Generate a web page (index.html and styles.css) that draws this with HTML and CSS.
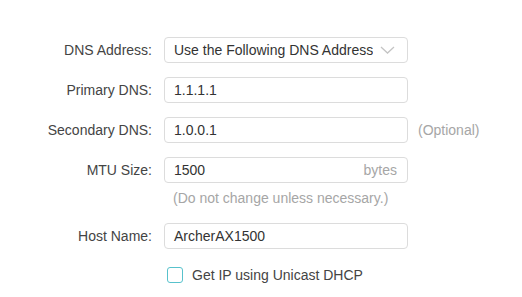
FILE: index.html
```html
<!DOCTYPE html>
<html lang="en">
<head>
  <meta charset="UTF-8" />
  <title>Internet Settings</title>
  <link rel="stylesheet" href="styles.css">
</head>
<body>
  <div class="form">
    <div class="row">
      <label class="label">DNS Address:</label>
      <div class="field select">
        <span class="value clip">Use the Following DNS Addresses</span>
        <svg class="chevron" width="15" height="8" viewBox="0 0 15 8">
          <polyline points="1,1 7.5,7 14,1" fill="none" stroke="#c4c4c4" stroke-width="1.3"/>
        </svg>
      </div>
    </div>

    <div class="row">
      <label class="label">Primary DNS:</label>
      <div class="field"><span class="value">1.1.1.1</span></div>
    </div>

    <div class="row">
      <label class="label">Secondary DNS:</label>
      <div class="field"><span class="value">1.0.0.1</span></div>
      <span class="note">(Optional)</span>
    </div>

    <div class="row tight">
      <label class="label">MTU Size:</label>
      <div class="field">
        <span class="value">1500</span>
        <span class="unit">bytes</span>
      </div>
    </div>
    <div class="hint">(Do not change unless necessary.)</div>

    <div class="row">
      <label class="label">Host Name:</label>
      <div class="field"><span class="value">ArcherAX1500</span></div>
    </div>

    <div class="check-row">
      <span class="checkbox"></span>
      <span class="check-label">Get IP using Unicast DHCP</span>
    </div>
  </div>
</body>
</html>
```

FILE: styles.css
```css
body {
  margin: 0;
  background: #fff;
  font-family: "Liberation Sans", Arial, sans-serif;
  font-size: 14px;
  color: #333;
}
.form {
  padding-top: 37px;
}
.row {
  display: flex;
  align-items: center;
  height: 26px;
  margin-bottom: 14px;
}
.row.tight {
  margin-bottom: 0;
}
.label {
  width: 152px;
  text-align: right;
  color: #444;
  margin-right: 12px;
}
.field {
  box-sizing: border-box;
  width: 244px;
  height: 26px;
  border: 1px solid #dcdcdc;
  border-radius: 4px;
  display: flex;
  align-items: center;
  padding: 0 10px 0 9px;
}
.value {
  flex: 1;
  color: #333;
  white-space: nowrap;
}
.clip {
  overflow: hidden;
  margin-right: 7px;
}
.chevron {
  flex: none;
  margin-right: 2px;
}
.unit {
  color: #a6a6a6;
}
.note {
  margin-left: 10px;
  color: #a6a6a6;
}
.hint {
  margin: 7px 0 17px 173px;
  line-height: 16px;
  color: #a6a6a6;
}
.check-row {
  display: flex;
  align-items: center;
  margin-left: 167px;
  margin-top: 18px;
}
.checkbox {
  box-sizing: border-box;
  width: 16px;
  height: 16px;
  border: 1px solid #58c2cc;
  border-radius: 3px;
}
.check-label {
  margin-left: 9px;
  color: #444;
}
```
